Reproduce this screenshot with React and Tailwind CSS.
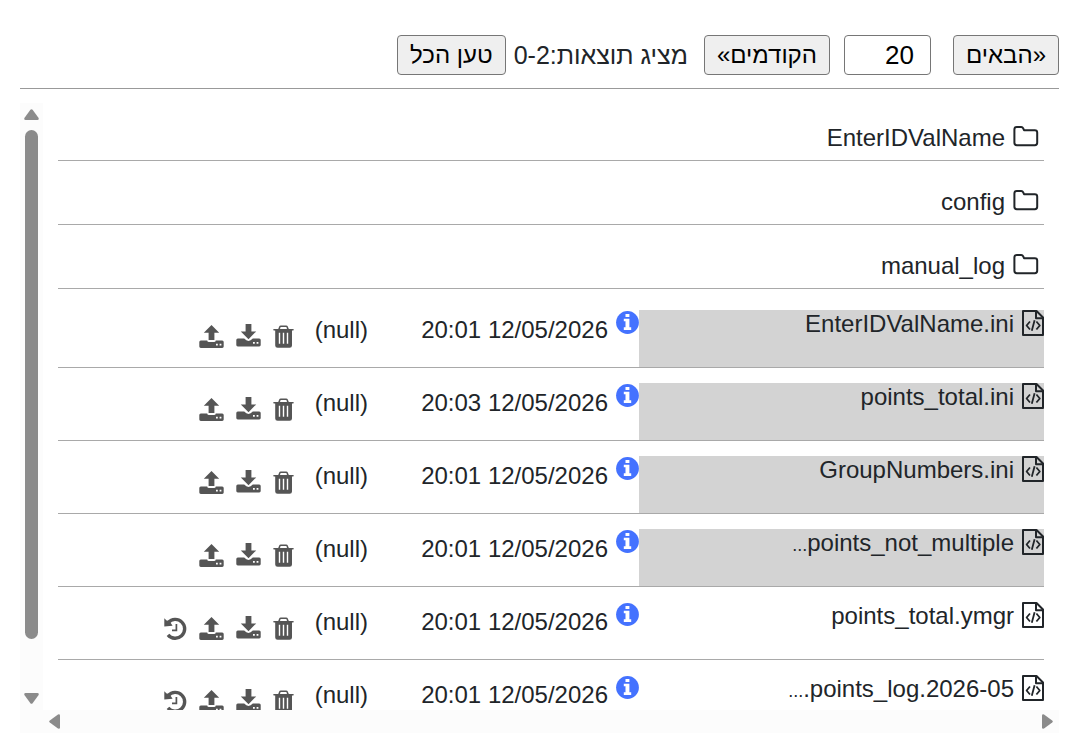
import { useState } from 'react'

const FOLDERS = ['EnterIDValName', 'config', 'manual_log']

const FILES = [
  { name: 'EnterIDValName.ini', date: '12/05/2026 20:01', system: true },
  { name: 'points_total.ini', date: '12/05/2026 20:03', system: true },
  { name: 'GroupNumbers.ini', date: '12/05/2026 20:01', system: true },
  { name: 'points_not_multiple', cut: true, date: '12/05/2026 20:01', system: true },
  { name: 'points_total.ymgr', date: '12/05/2026 20:01', history: true },
  { name: 'points_log.2026-05.', cut: true, date: '12/05/2026 20:01', history: true },
]

function FolderIcon() {
  return (
    <svg className="w-[26px] h-6 shrink-0" viewBox="0 0 26 24" fill="none" stroke="currentColor" strokeWidth="2" strokeLinejoin="round">
      <path d="M1.4 3.4Q1.4 1 3.8 1H8.2Q9.6 1 10.2 2.4L11 4.2H21.8Q24.2 4.2 24.2 6.6V16.8Q24.2 19.2 21.8 19.2H3.8Q1.4 19.2 1.4 16.8Z" />
    </svg>
  )
}

function CodeFileIcon() {
  return (
    <svg className="w-[22px] h-[26px] shrink-0" viewBox="0 0 22 26" fill="none" stroke="currentColor" strokeWidth="2" strokeLinejoin="round">
      <path d="M1 1H14.5L21 7.5V25H1Z" />
      <path d="M14 1V8.2H21" />
      <path d="M8 11.5L4.6 15.5L8 19.5M14.4 11.5L17.8 15.5L14.4 19.5M12.6 10.2L9.8 20.8" strokeWidth="1.8" />
    </svg>
  )
}

function InfoIcon() {
  return (
    <svg className="w-[23px] h-[23px]" viewBox="0 0 23 23">
      <circle cx="11.5" cy="11.5" r="11.4" fill="#4472ff" />
      <path fill="#fff" d="M9.5 2.9H13.4V6.1H9.5ZM7.8 7.7H13.4V16.2H15.2V18.9H7.8V16.2H9.5V10.3H7.8Z" />
    </svg>
  )
}

function TrashIcon() {
  return (
    <svg className="w-[21px] h-[23px]" viewBox="0 0 21 23" fill="currentColor">
      <path
        fillRule="evenodd"
        d="M5.2 4L6.2 1.6Q6.6.5 7.8.5H13.2Q14.4.5 14.8 1.6L15.8 4H20Q20.8 4 20.8 4.8Q20.8 5.6 20 5.6H19V20.4Q19 22.8 16.6 22.8H4.6Q2.2 22.8 2.2 20.4V5.6H1Q.2 5.6.2 4.8Q.2 4 1 4ZM7 4H14L13.4 2H7.6ZM5.8 7.8V18.8H7.2V7.8ZM9.8 7.8V18.8H11.2V7.8ZM13.8 7.8V18.8H15.2V7.8Z"
      />
    </svg>
  )
}

function DownloadIcon() {
  return (
    <svg className="w-[25px] h-[23px]" viewBox="0 0 25 23" fill="currentColor">
      <path d="M9.6 0H15.4V7.4H20.2L12.5 15.2L4.8 7.4H9.6Z" />
      <path fillRule="evenodd" d="M1.8 14.6H8.2Q12.5 19.5 16.8 14.6H23.2Q24.7 14.6 24.7 16.1V21Q24.7 22.4 23.2 22.4H1.8Q.3 22.4.3 21V16.1Q.3 14.6 1.8 14.6ZM17 18V19.8H18.8V18ZM20.6 18V19.8H22.4V18Z" />
    </svg>
  )
}

function UploadIcon() {
  return (
    <svg className="w-[25px] h-[23px]" viewBox="0 0 25 23" fill="currentColor">
      <path d="M12.5 0L20.2 7.8H15.4V15H9.6V7.8H4.8Z" />
      <path fillRule="evenodd" d="M1.8 15.4H8.2Q8.4 17 10 17H15Q16.6 17 16.8 15.4H23.2Q24.7 15.4 24.7 16.9V21.6Q24.7 23 23.2 23H1.8Q.3 23 .3 21.6V16.9Q.3 15.4 1.8 15.4ZM17 18.8V20.6H18.8V18.8ZM20.6 18.8V20.6H22.4V18.8Z" />
    </svg>
  )
}

function HistoryIcon() {
  return (
    <svg className="w-[23px] h-[23px]" viewBox="0 0 23 23" fill="none" stroke="currentColor">
      <path d="M4.2 5.6A9.4 9.4 0 1 1 4 17.8" strokeWidth="3.4" />
      <path d="M.3 1.2L2.6 3.4L5.4 4L8.6 8.8L.3 9.6Z" fill="currentColor" stroke="none" />
      <path d="M12.4 7V13.4H8" strokeWidth="1.7" />
    </svg>
  )
}

function Arrow({ className }) {
  return (
    <svg className={`w-[15px] h-[11px] ${className}`} viewBox="0 0 15 11" fill="#8b8b8b">
      <path d="M6.4.8Q7.5-.4 8.6.8L14.6 9Q15.2 11 13.4 11H1.6Q-.2 11 .4 9Z" />
    </svg>
  )
}

function FileRow({ file }) {
  return (
    <tr>
      <td className="border-b border-[#a9a9a9] p-0 pt-[15px] align-top">
        <div className={`flex items-start gap-2 h-[57px] ${file.system ? 'bg-[#d3d3d3]' : ''}`}>
          <CodeFileIcon />
          <span className="whitespace-nowrap">
            {file.name}
            {file.cut && <span className="text-lg leading-none">...</span>}
          </span>
        </div>
      </td>
      <td className="border-b border-[#a9a9a9] p-0 pt-4 align-top">
        <div className="flex items-start gap-2">
          <button type="button" aria-label="מידע"><InfoIcon /></button>
          <span className="pt-[5px] whitespace-nowrap">{file.date}</span>
        </div>
      </td>
      <td className="border-b border-[#a9a9a9] p-0 pt-[21px] align-top">(null)</td>
      <td className="border-b border-[#a9a9a9] p-0 pt-[29px] align-top">
        <div className="flex items-start gap-3 text-[#555]">
          <button type="button" aria-label="מחק" className="pt-px"><TrashIcon /></button>
          <button type="button" aria-label="הורד"><DownloadIcon /></button>
          <button type="button" aria-label="העלה" className="pt-px"><UploadIcon /></button>
          {file.history && <button type="button" aria-label="היסטוריה" className="pt-px"><HistoryIcon /></button>}
        </div>
      </td>
    </tr>
  )
}

const BUTTON = 'h-10 px-3 border border-[#767676] rounded-[4px] bg-[#efefef] text-black text-2xl leading-9 whitespace-nowrap'

export default function App() {
  const [count, setCount] = useState('20')

  return (
    <div
      dir="rtl"
      className="h-screen flex flex-col pt-[35px] pb-[6px] pl-5 pr-[22px] bg-white text-[#212529] text-2xl leading-7 font-['Liberation_Sans',Arial,sans-serif]"
    >
      {/* Paging */}
      <div className="flex items-center shrink-0">
        <button type="button" className={BUTTON}>«הבאים</button>
        <input
          type="text"
          inputMode="numeric"
          aria-label="מספר תוצאות"
          value={count}
          onChange={e => setCount(e.target.value)}
          className="w-[87px] h-10 ms-[22px] me-[14px] ps-4 border border-[#767676] rounded-[4px] bg-white text-black text-[26px]"
        />
        <button type="button" className={BUTTON}>הקודמים»</button>
        <span className="ms-4 me-2 text-[25px] whitespace-nowrap">מציג תוצאות:0-2</span>
        <button type="button" className={BUTTON}>טען הכל</button>
      </div>
      <hr className="mt-[13px] mb-[14px] border-t border-[#999]" />

      {/* File list */}
      <div className="flex flex-1 min-h-0">
        <div className="flex-1 min-w-0 flex flex-col">
          <div className="flex-1 min-h-0 overflow-hidden px-[15px]">
            <ul>
              {FOLDERS.map(name => (
                <li key={name} className="pt-[27px] first:pt-[21px] pb-2 border-b border-[#a9a9a9]">
                  <a href="#" className="flex items-center gap-2 ps-[5px]">
                    <FolderIcon />
                    {name}
                  </a>
                </li>
              ))}
            </ul>
            <table className="w-full mt-[6px] table-fixed border-separate border-spacing-0">
              <colgroup>
                <col />
                <col className="w-[271px]" />
                <col className="w-[74px]" />
                <col className="w-[236px]" />
              </colgroup>
              <tbody>
                {FILES.map(file => <FileRow key={file.name} file={file} />)}
              </tbody>
            </table>
          </div>
          <div className="h-[23px] shrink-0 flex items-center justify-between px-1 bg-[#fcfcfc]">
            <Arrow className="rotate-90" />
            <Arrow className="-rotate-90" />
          </div>
        </div>

        {/* Vertical scroll bar */}
        <div className="w-[23px] shrink-0 flex flex-col items-center pt-[6px] pb-[29px] bg-[#fcfcfc]">
          <Arrow className="shrink-0" />
          <div className="flex-1 w-full flex flex-col items-center pt-[10px] pb-[54px]">
            <div className="flex-1 w-[13px] rounded-full bg-[#8b8b8b]" />
          </div>
          <Arrow className="shrink-0 rotate-180" />
        </div>
      </div>
    </div>
  )
}
